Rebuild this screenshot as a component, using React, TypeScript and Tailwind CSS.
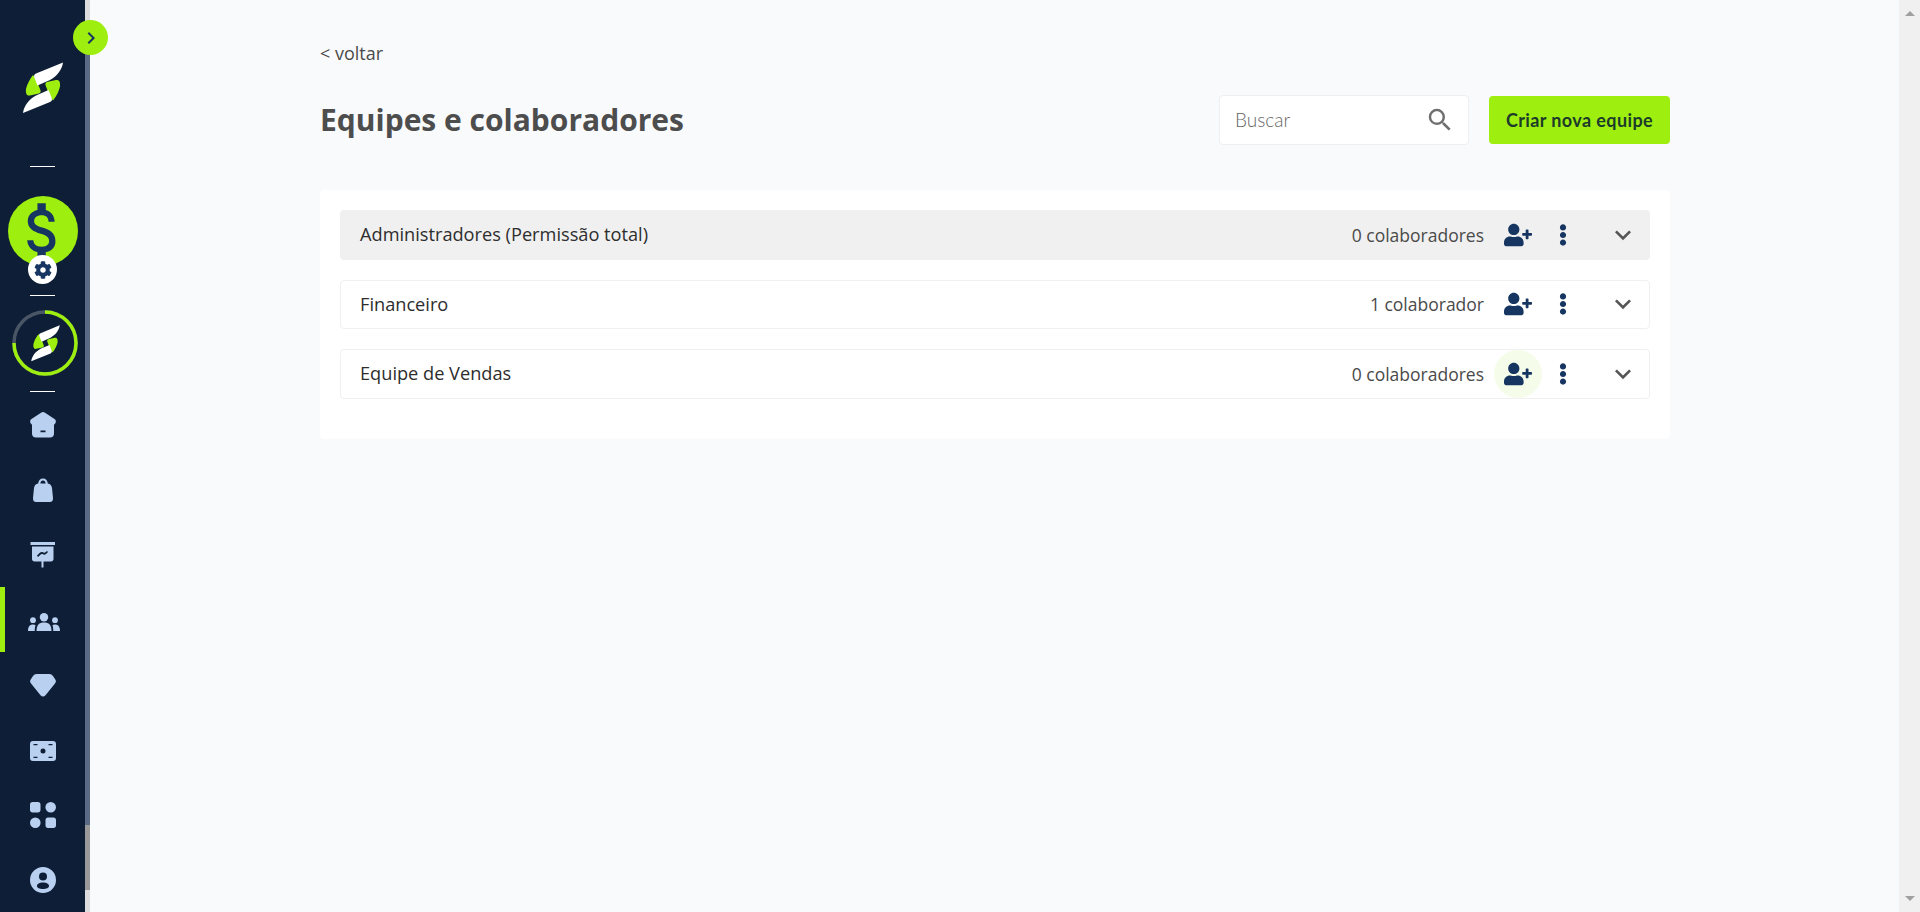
import { FaCog, FaEllipsisV, FaUserPlus } from 'react-icons/fa'
import { MdAttachMoney, MdKeyboardArrowDown, MdKeyboardArrowRight, MdSearch } from 'react-icons/md'

function Logo({ className }: { className: string }) {
  const green = 'M10 13 C6 18 4 23 3 27 C2.5 32 4 34 7 33.5 L16 31.5 C18 31 18 29 17 27 L13 17 Z'
  const white = 'M40 .5 L13 11.5 C11 12.5 10.5 14 11.5 16 L14.5 23.5 L27 18 C34 14 39 8 40 .5 Z'
  return (
    <svg viewBox="0 0 40 52" className={className}>
      <path d={green} fill="#9EEF10" />
      <path d={green} fill="#9EEF10" transform="rotate(180 20 25.75)" />
      <path d={white} fill="#fff" />
      <path d={white} fill="#fff" transform="rotate(180 20 25.75)" />
    </svg>
  )
}

function NavIcon({ d }: { d: string }) {
  return (
    <svg viewBox="0 0 26 26" className="w-[26px] h-[26px] fill-[#b9d0f0]">
      <path fillRule="evenodd" d={d} />
    </svg>
  )
}

const teams = [
  { name: 'Administradores (Permissão total)', count: '0 colaboradores', active: true },
  { name: 'Financeiro', count: '1 colaborador' },
  { name: 'Equipe de Vendas', count: '0 colaboradores', hover: true },
]

export default function App() {
  return (
    <div className="relative flex h-[912px] overflow-hidden bg-[#f9fafc] font-['Open_Sans',sans-serif]">
      <aside className="w-[85px] shrink-0 flex flex-col items-center bg-[#0d1e36]">
        <div className="h-[166px] flex justify-center pt-[62px] w-full">
          <Logo className="w-[40px] h-[52px]" />
        </div>
        <div className="w-[25px] h-px bg-white" />
        <div className="relative h-[128px] w-full">
          <div className="absolute left-[8px] top-[29px] w-[70px] h-[70px] rounded-full bg-[#9EEF10] flex items-center justify-center text-[#163561]">
            <MdAttachMoney size={74} className="shrink-0 scale-x-90" />
          </div>
          <div className="absolute left-[28px] top-[88px] w-[29px] h-[29px] rounded-full bg-white flex items-center justify-center text-[#163561]">
            <FaCog size={18} />
          </div>
        </div>
        <div className="w-[25px] h-px bg-white" />
        <div className="relative h-[95px] w-full">
          <svg viewBox="0 0 66 66" className="absolute left-[12px] top-[14px] w-[66px] h-[66px]">
            <circle cx="33" cy="33" r="31" fill="none" stroke="#4a5566" strokeWidth="3.5" />
            <path d="M33 2 A31 31 0 1 1 2 33" fill="none" stroke="#9EEF10" strokeWidth="3.5" />
          </svg>
          <Logo className="absolute left-[31px] top-[29px] w-[29px] h-[37px]" />
        </div>
        <div className="w-[25px] h-px bg-white" />
        {/* menu */}
        <div className="h-[65px] w-full flex items-center justify-center">
          <NavIcon d="M13 0 C13.7 0 14.4 .3 15 .7 L24.5 7 C26 8 26.3 10 25.2 11.5 L24 12.8 V21.5 C24 24 22.5 25.5 20 25.5 H6 C3.5 25.5 2 24 2 21.5 V12.8 L.8 11.5 C-.3 10 0 8 1.5 7 L11 .7 C11.6 .3 12.3 0 13 0 Z M10.5 18.5 V20.3 H15.5 V18.5 Z" />
        </div>
        <div className="h-[65px] w-full flex items-center justify-center">
          <NavIcon d="M13 1.5 C16 1.5 17.5 3.5 17.8 6.5 C20.5 7 21.5 8.5 22 11 L23 21 C23.2 24 21.5 25 20 25 H6 C4.5 25 2.8 24 3 21 L4 11 C4.5 8.5 5.5 7 8.2 6.5 C8.5 3.5 10 1.5 13 1.5 Z M13 3.5 C11.5 3.5 10.5 4.7 10.4 6.5 H15.6 C15.5 4.7 14.5 3.5 13 3.5 Z" />
        </div>
        <div className="h-[65px] w-full flex items-center justify-center">
          <NavIcon d="M.5 0 H25 V3 H.5 Z M2 4.5 H23.5 V17 C23.5 18.5 22.5 19.5 21 19.5 H13.5 V25.5 H11.5 V19.5 H4.5 C3 19.5 2 18.5 2 17 Z M7 13.5 L8 15 C10 13 11 11.5 12.5 12 C14 13 15 13.5 18 10 L17 9 C15 11 14 11 13 10.3 C11 9 9.5 11 7 13.5 Z" />
        </div>
        <div className="relative h-[65px] w-full flex items-center justify-center pl-[3px] pt-[4px]">
          <div className="absolute left-0 top-0 w-[5px] h-full bg-[#9EEF10]" />
          <svg viewBox="0 0 32 18" className="w-[32px] h-[18px] fill-[#b9d0f0]">
            <circle cx="16" cy="4.2" r="4.2" />
            <path d="M8.5 18 C8.5 12 11 9.5 16 9.5 C21 9.5 23.5 12 23.5 18 Z" />
            <circle cx="5" cy="7.2" r="2.9" />
            <path d="M0 18 C0 13.5 2 11.5 5 11.5 C6 11.5 7 11.8 7.6 12.2 C7 13.5 6.7 15.5 6.7 18 Z" />
            <circle cx="27" cy="7.2" r="2.9" />
            <path d="M32 18 C32 13.5 30 11.5 27 11.5 C26 11.5 25 11.8 24.4 12.2 C25 13.5 25.3 15.5 25.3 18 Z" />
          </svg>
        </div>
        <div className="h-[65px] w-full flex items-center justify-center pt-[1px]">
          <NavIcon d="M6.5 2 H19.5 C21 2 22 2.8 23 4 L25.3 7.5 C26.3 9 26 10.3 25 11.5 L15.5 23.3 C14 25 12 25 10.5 23.3 L1 11.5 C0 10.3 -.3 9 .7 7.5 L3 4 C4 2.8 5 2 6.5 2 Z" />
        </div>
        <div className="h-[65px] w-full flex items-center justify-center pt-[3px]">
          <NavIcon d="M3 3 H23 C25 3 26 4 26 6 V20 C26 22 25 23 23 23 H3 C1 23 0 22 0 20 V6 C0 4 1 3 3 3 Z M13 10.5 A2.5 2.5 0 1 0 13 15.5 A2.5 2.5 0 1 0 13 10.5 Z M3.5 6 V7.2 H7.5 V6 Z M18.5 6 V7.2 H22.5 V6 Z M3.5 18.8 V20 H7.5 V18.8 Z M18.5 18.8 V20 H22.5 V18.8 Z" />
        </div>
        <div className="h-[65px] w-full flex items-center justify-center">
          <NavIcon d="M2.5 0 H8 C9.5 0 10.5 1 10.5 2.5 V8 C10.5 9.5 9.5 10.5 8 10.5 H2.5 C1 10.5 0 9.5 0 8 V2.5 C0 1 1 0 2.5 0 Z M20.7 0 A5.3 5.3 0 1 1 20.7 10.6 A5.3 5.3 0 1 1 20.7 0 Z M5.3 15.4 A5.3 5.3 0 1 1 5.3 26 A5.3 5.3 0 1 1 5.3 15.4 Z M18 15.5 H23.5 C25 15.5 26 16.5 26 18 V23.5 C26 25 25 26 23.5 26 H18 C16.5 26 15.5 25 15.5 23.5 V18 C15.5 16.5 16.5 15.5 18 15.5 Z" />
        </div>
        <div className="h-[65px] w-full flex items-center justify-center">
          <NavIcon d="M13 0 A13 13 0 1 1 13 26 A13 13 0 1 1 13 0 Z M13 5.5 A4 4 0 1 0 13 13.5 A4 4 0 1 0 13 5.5 Z M13 15.5 C9.5 15.5 7 17 7 19 C7 20.8 9.5 22 13 22 C16.5 22 19 20.8 19 19 C19 17 16.5 15.5 13 15.5 Z" />
        </div>
      </aside>

      {/* barra de rolagem do menu */}
      <div className="w-[5px] shrink-0 flex flex-col pt-[30px] bg-[#dcdcdc]">
        <div className="h-[795px] bg-[#5b6a85]" />
        <div className="h-[65px] bg-[#999999]" />
      </div>

      <main className="flex-1 pl-[230px] pt-[42px]">
        <div className="w-[1350px]">
          <a className="block text-[18px] leading-[22px] text-[#4a4a4a]">&lt; voltar</a>

          <div className="mt-[32px] h-[48px] flex items-center justify-between">
            <h1 className="text-[30px] font-bold text-[#4d4d4d] leading-none">Equipes e colaboradores</h1>
            <div className="flex items-center gap-[20px]">
              <div className="w-[250px] h-[50px] bg-white border border-[#efefef] rounded-[4px] flex items-center justify-between pl-[15px] pr-[13px]">
                <span className="font-['Lato',sans-serif] font-light text-[19px] text-[#666666]">Buscar</span>
                <MdSearch size={30} className="text-[#6f6f6f]" />
              </div>
              <button className="w-[181px] h-[48px] bg-[#9EEF10] rounded-[4px] font-['Lato',sans-serif] font-bold text-[18px] tracking-[0.4px] text-[#1c3b2a]">
                Criar nova equipe
              </button>
            </div>
          </div>

          <section className="mt-[46px] h-[249px] bg-white rounded-[4px] px-[20px] pt-[20px] flex flex-col gap-[20px]">
            {teams.map((team) => (
              <div
                key={team.name}
                className={
                  team.active
                    ? 'h-[49.5px] flex items-center rounded-[4px] bg-[#f0f0f0] pl-[20px] pr-[11px]'
                    : 'h-[49.5px] flex items-center rounded-[4px] border border-[#f0f0f0] pl-[19px] pr-[10px]'
                }
              >
                <span className="flex-1 text-[18.2px] font-medium text-[#2d2d2d]">{team.name}</span>
                <span className="text-[17.5px] text-[#4a4a4a]">{team.count}</span>
                <div
                  className={
                    team.hover
                      ? 'ml-[10px] w-[48px] h-[48px] rounded-full bg-[#f5fdea] flex items-center justify-center text-[#163561]'
                      : 'ml-[10px] w-[48px] h-[48px] rounded-full flex items-center justify-center text-[#163561]'
                  }
                >
                  <FaUserPlus size={28} />
                </div>
                <div className="ml-[6px] w-[30px] flex justify-center text-[#163561]">
                  <FaEllipsisV size={22} />
                </div>
                <div className="ml-[29px] text-[#555555]">
                  <MdKeyboardArrowDown size={32} />
                </div>
              </div>
            ))}
          </section>
        </div>
      </main>

      {/* barra de rolagem da janela */}
      <div className="w-[21px] shrink-0 flex flex-col items-center justify-between py-[11px] bg-[#f0f0f0]">
        <div className="w-0 h-0 border-x-[5px] border-x-transparent border-b-[5px] border-b-[#a0a0a0]" />
        <div className="w-0 h-0 border-x-[5px] border-x-transparent border-t-[5px] border-t-[#a0a0a0]" />
      </div>

      <button className="absolute left-[73px] top-[20px] w-[35px] h-[35px] rounded-full bg-[#9EEF10] flex items-center justify-center text-[#163561]">
        <MdKeyboardArrowRight size={24} />
      </button>
    </div>
  )
}
